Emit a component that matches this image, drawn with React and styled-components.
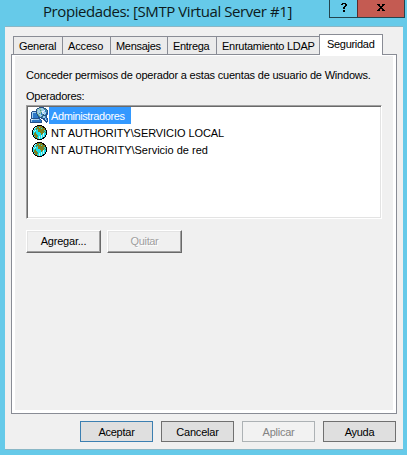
import React from "react";
import styled, { createGlobalStyle, css } from "styled-components";

const Global = createGlobalStyle`
  * { box-sizing: border-box; }
  body { margin: 0; background: #66cae9; overflow: hidden; }
`;

const Dialog = styled.div`
  width: 407px;
  height: 455px;
  padding: 0 4px 5px 5px;
  display: flex;
  flex-direction: column;
  background: #66cae9;
  color: #000;
  font: 11px/13px "Liberation Sans", Arial, sans-serif;
`;

const TitleBar = styled.header`
  height: 26px;
  flex: none;
  display: flex;
  align-items: flex-start;
  justify-content: space-between;
  padding-left: 38px;
  margin-right: -2px;
`;

const Title = styled.h1`
  margin: 0;
  font: 400 15px/22px "Open Sans", "Noto Sans", sans-serif;
  letter-spacing: ${(p) => p.$ls}px;
  white-space: nowrap;
  color: #0c1a20;
`;

const Controls = styled.div`
  display: flex;
  height: 18px;
  border: 1px solid #23444f;
  border-top: 0;
`;

const Control = styled.button`
  width: ${(p) => p.$width}px;
  height: 17px;
  padding: 0 0 3px;
  border: 0;
  display: flex;
  align-items: center;
  justify-content: center;
  background: ${(p) => (p.$close ? "#c45b52" : "transparent")};
  border-left: ${(p) => (p.$close ? "1px solid #5b2b2b" : "0")};
`;

const Client = styled.main`
  flex: 1;
  width: 398px;
  display: flex;
  flex-direction: column;
  background: #f0f0f0;
  border-top: 1px solid #8ab7c6;
  border-bottom: 1px solid #8ab7c6;
  padding: 7px 6px 7px;
`;

const Tabs = styled.nav`
  height: 20px;
  flex: none;
  display: flex;
  align-items: flex-end;
  padding-left: 2px;
`;

const Text = styled.span`
  display: block;
  white-space: nowrap;
  letter-spacing: ${(p) => p.$ls || 0}px;
`;

const Tab = styled.button`
  width: ${(p) => p.$width}px;
  height: 18px;
  flex: none;
  padding: 3px 0 0 5px;
  border: 1px solid #898c95;
  border-bottom: 0;
  margin-right: -1px;
  background: #ebebeb;
  font: inherit;
  color: #000;
  text-align: left;
  display: flex;
  ${(p) =>
    p.$active &&
    css`
      height: 21px;
      padding: 3px 0 0 7px;
      background: #fff;
      margin-bottom: -1px;
      z-index: 1;
    `}
`;

const Panel = styled.section`
  width: 386px;
  height: 360px;
  flex: none;
  border: 1px solid #898c95;
  background: #f0f0f0;
  box-shadow: inset 3px 0 #fff, inset -3px -3px #fff, inset 0 1px #fff;
  padding: 14px 14px 0;
`;

const Label = styled.div`
  height: 21px;
`;

const List = styled.ul`
  list-style: none;
  margin: 2px 0 0;
  width: 356px;
  height: 114px;
  background: #fff;
  border: 1px solid;
  border-color: #a0a0a0 #fff #fff #a0a0a0;
  box-shadow: inset 1px 1px #696969, inset -1px -1px #e3e3e3;
  padding: 1px 0 0 3px;
`;

const Row = styled.li`
  height: 17px;
  display: flex;
  align-items: flex-start;
`;

const IconBox = styled.span`
  width: 19px;
  height: 17px;
  flex: none;
  padding: ${(p) => (p.$globe ? "1px 0 0 2px" : "0")};
  svg { display: block; }
`;

const RowLabel = styled.span`
  height: 17px;
  padding: 3px 2px 0;
  width: ${(p) => (p.$selected ? "82px" : "auto")};
  background: ${(p) => (p.$selected ? "#3399ff" : "transparent")};
  color: ${(p) => (p.$selected ? "#fff" : "#000")};
`;

const Actions = styled.div`
  display: flex;
  gap: 6px;
  margin-top: 11px;
`;

const ClassicButton = styled.button`
  width: 75px;
  height: 23px;
  padding: 0 0 1px;
  display: flex;
  align-items: center;
  justify-content: center;
  font: inherit;
  color: ${(p) => (p.disabled ? "#a0a0a0" : "#000")};
  text-shadow: ${(p) => (p.disabled ? "1px 1px #fff" : "none")};
  background: #f0f0f0;
  border: 1px solid;
  border-color: #fff #696969 #696969 #fff;
  box-shadow: inset -1px -1px #a0a0a0, inset 1px 1px #e3e3e3;
`;

const Footer = styled.footer`
  display: flex;
  justify-content: flex-end;
  gap: 8px;
  margin-top: 7px;
  padding-right: 1px;
`;

const PushButton = styled.button`
  width: 73px;
  height: 21px;
  padding: 2px 0 0;
  display: flex;
  align-items: center;
  justify-content: center;
  font: inherit;
  color: ${(p) => (p.disabled ? "#838383" : "#000")};
  background: ${(p) => (p.disabled ? "#f2f2f2" : "#dfdfdf")};
  border: 1px solid ${(p) => (p.disabled ? "#adb2b5" : p.$primary ? "#3c7fb1" : "#707070")};
`;

const palette = {
  k: "#000000",
  c: "#19dfe8",
  o: "#80801c",
  g: "#3f8f6a",
  w: "#b9f3f5",
  n: "#24508c",
  b: "#2c78c8",
  l: "#9fcdf0",
  e: "#8fc4a8",
  t: "#4a8f8f",
  s: "#e4f0fa",
};

const globePixels = [
  ".....kkkkk.....",
  "...kkoooookk...",
  "..kwcoocoookk..",
  ".kwcooooocoook.",
  ".kccocooooooik.",
  "kwcwccoooooocgk",
  "kcwcccooooogock",
  "kccoccccoooocgk",
  "kcoocccccoowcck",
  "kcoooccccocwcck",
  ".kooogcccwcwck.",
  ".kcooocwcwcwck.",
  "..kooccwcwckk..",
  "...kkocwcckk...",
  ".....kkkkk.....",
].map((row) => row.replace("i", "o"));

const adminPixels = [
  ".........nnnnn....",
  ".......nneelltnn..",
  "......neleelllttn.",
  "......nelltellsbtn",
  "..nnnnnlllelsslbtn",
  ".nllllnelletslllbn",
  ".nlbbbnelteblsllnn",
  ".nlbbbbnellbtnltnb",
  ".nlbbbbntelltnnnn.",
  ".nlbbbbbntltnlltn.",
  ".nlbbbbbnnnntllbn.",
  ".nnnnnnnnn.nnnnlbn",
  "nssllllllbn..nnlbn",
  "nlbbbbbbbbbn..nnln",
  "nlbbbbbbbbbn...nnn",
  "nnnnnnnnnnnn....n.",
];

function PixelIcon({ rows }) {
  return (
    <svg width={rows[0].length} height={rows.length} shapeRendering="crispEdges" aria-hidden="true">
      {rows.flatMap((row, y) =>
        [...row].map((p, x) =>
          p === "." ? null : <rect key={`${x}-${y}`} x={x} y={y} width="1" height="1" fill={palette[p]} />
        )
      )}
    </svg>
  );
}

const helpPixels = [".kkkk.", "kk..kk", "....kk", "...kk.", "..kk..", "..kk..", "......", "..kk..", "..kk.."];
const closePixels = ["kkk..kkk", ".kk..kk.", "..kkkk..", "...kk...", "..kkkk..", ".kk..kk.", "kkk..kkk"];

const tabs = [
  { name: "General", width: 50, ls: -0.3 },
  { name: "Acceso", width: 49, ls: -0.15 },
  { name: "Mensajes", width: 58, ls: -0.3 },
  { name: "Entrega", width: 50, ls: -0.3 },
  { name: "Enrutamiento LDAP", width: 104, ls: -0.27 },
  { name: "Seguridad", width: 64, ls: -0.3, active: true },
];

const operators = [
  { name: "Administradores", ls: -0.4, icon: adminPixels, selected: true },
  { name: "NT AUTHORITY\\SERVICIO LOCAL", ls: -0.07, icon: globePixels },
  { name: "NT AUTHORITY\\Servicio de red", ls: 0, icon: globePixels },
];

export default function App() {
  return (
    <>
      <Global />
      <Dialog>
        <TitleBar>
          <Title $ls={-0.43}>Propiedades: [SMTP Virtual Server #1]</Title>
          <Controls>
            <Control $width={27} aria-label="Ayuda"><PixelIcon rows={helpPixels} /></Control>
            <Control $width={47} $close aria-label="Cerrar"><PixelIcon rows={closePixels} /></Control>
          </Controls>
        </TitleBar>
        <Client>
          <Tabs>
            {tabs.map((t) => (
              <Tab key={t.name} $width={t.width} $active={t.active}>
                <Text $ls={t.ls}>{t.name}</Text>
              </Tab>
            ))}
          </Tabs>
          <Panel>
            <Label><Text $ls={-0.2}>Conceder permisos de operador a estas cuentas de usuario de Windows.</Text></Label>
            <Text $ls={-0.25}>Operadores:</Text>
            <List>
              {operators.map((o) => (
                <Row key={o.name}>
                  <IconBox $globe={!o.selected}><PixelIcon rows={o.icon} /></IconBox>
                  <RowLabel $selected={o.selected}><Text $ls={o.ls}>{o.name}</Text></RowLabel>
                </Row>
              ))}
            </List>
            <Actions>
              <ClassicButton><Text $ls={-0.2}>Agregar...</Text></ClassicButton>
              <ClassicButton disabled><Text $ls={-0.35}>Quitar</Text></ClassicButton>
            </Actions>
          </Panel>
          <Footer>
            <PushButton $primary><Text $ls={-0.25}>Aceptar</Text></PushButton>
            <PushButton><Text $ls={-0.2}>Cancelar</Text></PushButton>
            <PushButton disabled><Text $ls={-0.25}>Aplicar</Text></PushButton>
            <PushButton><Text $ls={-0.3}>Ayuda</Text></PushButton>
          </Footer>
        </Client>
      </Dialog>
    </>
  );
}
